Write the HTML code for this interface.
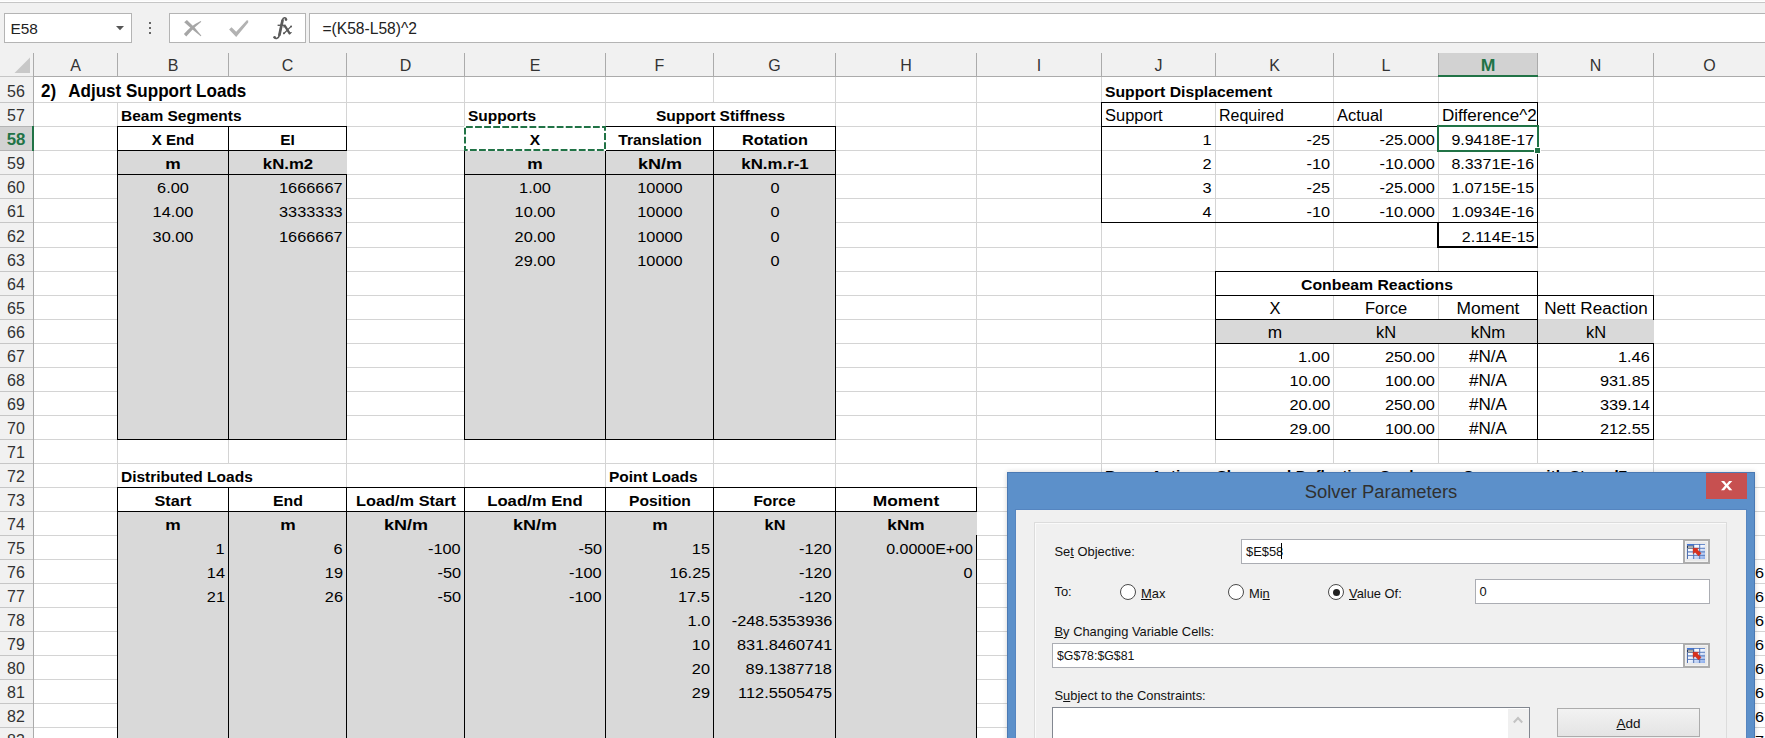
<!DOCTYPE html>
<html><head><meta charset="utf-8"><title>Excel Solver</title>
<style>
html,body{margin:0;padding:0;background:#fff}
body{width:1765px;height:738px;overflow:hidden;position:relative;font-family:"Liberation Sans",sans-serif}
#r{position:absolute;left:0;top:0;width:1765px;height:738px;overflow:hidden}
#r>div,#r>svg{position:absolute;display:block}
</style></head><body><div id="r">
<div style="left:0px;top:0px;width:1765px;height:77px;background:#f1f1f1;"></div>
<div style="left:0px;top:0px;width:1765px;height:1px;background:#fafafa;"></div>
<div style="left:0px;top:1px;width:1765px;height:1px;background:#fff;"></div>
<div style="left:0px;top:2px;width:1765px;height:1px;background:#c6c6c6;"></div>
<div style="left:4px;top:13px;width:128px;height:30px;background:#fff;border:1px solid #b4b4b4;box-sizing:border-box;"></div>
<div style="top:16.71px;height:24px;line-height:24px;font-size:15.4px;color:#222;white-space:pre;font-family:'Liberation Sans',sans-serif;left:10.5px;">E58</div>
<svg style="left:115px;top:25px" width="10" height="6"><path d="M1 1h8L5 5.2z" fill="#555"/></svg>
<div style="left:149px;top:22px;width:2px;height:2px;background:#666;"></div>
<div style="left:149px;top:27px;width:2px;height:2px;background:#666;"></div>
<div style="left:149px;top:32px;width:2px;height:2px;background:#666;"></div>
<div style="left:169px;top:13px;width:137px;height:30px;background:#fff;border:1px solid #b4b4b4;box-sizing:border-box;"></div>
<svg style="left:180px;top:16px" width="120" height="26"><path d="M6.9 3.9Q15 11 21.4 19.7L20.7 20.3Q12 13.5 4.2 6.3Z" fill="#a6a6a6"/><path d="M3.9 18Q11 9.5 20.7 4.9L21.3 5.7Q13.5 11.5 6.3 20.4Z" fill="#a6a6a6"/><path d="M49.1 13.5L51.5 11.2L56.2 15.8L66.8 4.3L68.2 4.6L68.2 6.5L56.2 21Z" fill="#b2b2b2"/></svg>
<svg style="left:270px;top:14px" width="24" height="28"><path d="M16.2 5.3C16 3.3 13.2 2.9 12.4 6.2L9.3 21.4C8.6 24.7 5.6 25.2 4.4 23.6" stroke="#5a5a5a" stroke-width="1.6" fill="none" stroke-linecap="round"/><path d="M12.5 6.5L9.4 21" stroke="#5a5a5a" stroke-width="2.7" fill="none" stroke-linecap="round"/><path d="M7.6 11.3H15.6" stroke="#5a5a5a" stroke-width="1.4" fill="none"/><circle cx="16" cy="5.6" r="1.3" fill="#5a5a5a"/><circle cx="4.6" cy="23.3" r="1.3" fill="#5a5a5a"/><path d="M15.2 12.4L19.6 19.4" stroke="#5a5a5a" stroke-width="2.3" fill="none" stroke-linecap="round"/><path d="M21.1 12.3L13.9 19.5" stroke="#5a5a5a" stroke-width="1.2" fill="none" stroke-linecap="round"/><path d="M13.8 12.9L15.2 12.2M19.6 19.5L21.2 18.6" stroke="#5a5a5a" stroke-width="1.2" fill="none" stroke-linecap="round"/><circle cx="21.1" cy="12.5" r=".95" fill="#5a5a5a"/><circle cx="13.9" cy="19.3" r=".95" fill="#5a5a5a"/></svg>
<div style="left:309px;top:13px;width:1458px;height:30px;background:#fff;border:1px solid #b4b4b4;box-sizing:border-box;"></div>
<div style="top:16.84px;height:24px;line-height:24px;font-size:15.6px;color:#222;white-space:pre;font-family:'Liberation Sans',sans-serif;left:322.5px;">=(K58-L58)^2</div>
<div style="left:0px;top:76px;width:1766px;height:1px;background:#ababab;"></div>
<div style="left:0px;top:76px;width:33px;height:1px;background:#c6c6c6;"></div>
<svg style="left:14px;top:57px" width="17" height="17"><path d="M16 0.5V16H0.5z" fill="#c8c8c8"/></svg>
<div style="left:1438px;top:53px;width:100px;height:22px;background:#d2d2d2;"></div>
<div style="left:33px;top:53px;width:1px;height:24px;background:#ababab;"></div>
<div style="left:117px;top:53px;width:1px;height:24px;background:#ababab;"></div>
<div style="left:228px;top:53px;width:1px;height:24px;background:#ababab;"></div>
<div style="left:346px;top:53px;width:1px;height:24px;background:#ababab;"></div>
<div style="left:464px;top:53px;width:1px;height:24px;background:#ababab;"></div>
<div style="left:605px;top:53px;width:1px;height:24px;background:#ababab;"></div>
<div style="left:713px;top:53px;width:1px;height:24px;background:#ababab;"></div>
<div style="left:835px;top:53px;width:1px;height:24px;background:#ababab;"></div>
<div style="left:976px;top:53px;width:1px;height:24px;background:#ababab;"></div>
<div style="left:1101px;top:53px;width:1px;height:24px;background:#ababab;"></div>
<div style="left:1215px;top:53px;width:1px;height:24px;background:#ababab;"></div>
<div style="left:1333px;top:53px;width:1px;height:24px;background:#ababab;"></div>
<div style="left:1438px;top:53px;width:1px;height:24px;background:#ababab;"></div>
<div style="left:1537px;top:53px;width:1px;height:24px;background:#ababab;"></div>
<div style="left:1653px;top:53px;width:1px;height:24px;background:#ababab;"></div>
<div style="left:1438px;top:75px;width:100px;height:2px;background:#217346;"></div>
<div style="top:53.91px;height:24px;line-height:24px;font-size:16px;color:#333;white-space:pre;font-family:'Liberation Sans',sans-serif;left:-324.5px;width:800px;text-align:center;">A</div>
<div style="top:53.91px;height:24px;line-height:24px;font-size:16px;color:#333;white-space:pre;font-family:'Liberation Sans',sans-serif;left:-227.0px;width:800px;text-align:center;">B</div>
<div style="top:53.91px;height:24px;line-height:24px;font-size:16px;color:#333;white-space:pre;font-family:'Liberation Sans',sans-serif;left:-112.5px;width:800px;text-align:center;">C</div>
<div style="top:53.91px;height:24px;line-height:24px;font-size:16px;color:#333;white-space:pre;font-family:'Liberation Sans',sans-serif;left:5.5px;width:800px;text-align:center;">D</div>
<div style="top:53.91px;height:24px;line-height:24px;font-size:16px;color:#333;white-space:pre;font-family:'Liberation Sans',sans-serif;left:135.0px;width:800px;text-align:center;">E</div>
<div style="top:53.91px;height:24px;line-height:24px;font-size:16px;color:#333;white-space:pre;font-family:'Liberation Sans',sans-serif;left:259.5px;width:800px;text-align:center;">F</div>
<div style="top:53.91px;height:24px;line-height:24px;font-size:16px;color:#333;white-space:pre;font-family:'Liberation Sans',sans-serif;left:374.5px;width:800px;text-align:center;">G</div>
<div style="top:53.91px;height:24px;line-height:24px;font-size:16px;color:#333;white-space:pre;font-family:'Liberation Sans',sans-serif;left:506.0px;width:800px;text-align:center;">H</div>
<div style="top:53.91px;height:24px;line-height:24px;font-size:16px;color:#333;white-space:pre;font-family:'Liberation Sans',sans-serif;left:639.0px;width:800px;text-align:center;">I</div>
<div style="top:53.91px;height:24px;line-height:24px;font-size:16px;color:#333;white-space:pre;font-family:'Liberation Sans',sans-serif;left:758.5px;width:800px;text-align:center;">J</div>
<div style="top:53.91px;height:24px;line-height:24px;font-size:16px;color:#333;white-space:pre;font-family:'Liberation Sans',sans-serif;left:874.5px;width:800px;text-align:center;">K</div>
<div style="top:53.91px;height:24px;line-height:24px;font-size:16px;color:#333;white-space:pre;font-family:'Liberation Sans',sans-serif;left:986.0px;width:800px;text-align:center;">L</div>
<div style="top:53.91px;height:24px;line-height:24px;font-size:16px;color:#217346;white-space:pre;font-family:'Liberation Sans',sans-serif;font-weight:bold;left:1088.0px;width:800px;text-align:center;transform:scaleX(1.1);transform-origin:50% 0;">M</div>
<div style="top:53.91px;height:24px;line-height:24px;font-size:16px;color:#333;white-space:pre;font-family:'Liberation Sans',sans-serif;left:1195.5px;width:800px;text-align:center;">N</div>
<div style="top:53.91px;height:24px;line-height:24px;font-size:16px;color:#333;white-space:pre;font-family:'Liberation Sans',sans-serif;left:1309.5px;width:800px;text-align:center;">O</div>
<div style="left:0px;top:77px;width:1765px;height:661px;background:#fff;"></div>
<div style="left:34px;top:102px;width:1732px;height:1px;background:#d4d4d4;"></div>
<div style="left:34px;top:126px;width:1732px;height:1px;background:#d4d4d4;"></div>
<div style="left:34px;top:150px;width:1732px;height:1px;background:#d4d4d4;"></div>
<div style="left:34px;top:174px;width:1732px;height:1px;background:#d4d4d4;"></div>
<div style="left:34px;top:198px;width:1732px;height:1px;background:#d4d4d4;"></div>
<div style="left:34px;top:222px;width:1732px;height:1px;background:#d4d4d4;"></div>
<div style="left:34px;top:247px;width:1732px;height:1px;background:#d4d4d4;"></div>
<div style="left:34px;top:271px;width:1732px;height:1px;background:#d4d4d4;"></div>
<div style="left:34px;top:295px;width:1732px;height:1px;background:#d4d4d4;"></div>
<div style="left:34px;top:319px;width:1732px;height:1px;background:#d4d4d4;"></div>
<div style="left:34px;top:343px;width:1732px;height:1px;background:#d4d4d4;"></div>
<div style="left:34px;top:367px;width:1732px;height:1px;background:#d4d4d4;"></div>
<div style="left:34px;top:391px;width:1732px;height:1px;background:#d4d4d4;"></div>
<div style="left:34px;top:415px;width:1732px;height:1px;background:#d4d4d4;"></div>
<div style="left:34px;top:439px;width:1732px;height:1px;background:#d4d4d4;"></div>
<div style="left:34px;top:463px;width:1732px;height:1px;background:#d4d4d4;"></div>
<div style="left:34px;top:487px;width:1732px;height:1px;background:#d4d4d4;"></div>
<div style="left:34px;top:511px;width:1732px;height:1px;background:#d4d4d4;"></div>
<div style="left:34px;top:535px;width:1732px;height:1px;background:#d4d4d4;"></div>
<div style="left:34px;top:559px;width:1732px;height:1px;background:#d4d4d4;"></div>
<div style="left:34px;top:583px;width:1732px;height:1px;background:#d4d4d4;"></div>
<div style="left:34px;top:607px;width:1732px;height:1px;background:#d4d4d4;"></div>
<div style="left:34px;top:631px;width:1732px;height:1px;background:#d4d4d4;"></div>
<div style="left:34px;top:655px;width:1732px;height:1px;background:#d4d4d4;"></div>
<div style="left:34px;top:679px;width:1732px;height:1px;background:#d4d4d4;"></div>
<div style="left:34px;top:703px;width:1732px;height:1px;background:#d4d4d4;"></div>
<div style="left:34px;top:727px;width:1732px;height:1px;background:#d4d4d4;"></div>
<div style="left:117px;top:77px;width:1px;height:662px;background:#d4d4d4;"></div>
<div style="left:228px;top:77px;width:1px;height:662px;background:#d4d4d4;"></div>
<div style="left:346px;top:77px;width:1px;height:662px;background:#d4d4d4;"></div>
<div style="left:464px;top:77px;width:1px;height:662px;background:#d4d4d4;"></div>
<div style="left:605px;top:77px;width:1px;height:662px;background:#d4d4d4;"></div>
<div style="left:713px;top:77px;width:1px;height:662px;background:#d4d4d4;"></div>
<div style="left:835px;top:77px;width:1px;height:662px;background:#d4d4d4;"></div>
<div style="left:976px;top:77px;width:1px;height:662px;background:#d4d4d4;"></div>
<div style="left:1101px;top:77px;width:1px;height:662px;background:#d4d4d4;"></div>
<div style="left:1215px;top:77px;width:1px;height:662px;background:#d4d4d4;"></div>
<div style="left:1333px;top:77px;width:1px;height:662px;background:#d4d4d4;"></div>
<div style="left:1438px;top:77px;width:1px;height:662px;background:#d4d4d4;"></div>
<div style="left:1537px;top:77px;width:1px;height:662px;background:#d4d4d4;"></div>
<div style="left:1653px;top:77px;width:1px;height:662px;background:#d4d4d4;"></div>
<div style="left:117px;top:77px;width:1px;height:25px;background:#fff;"></div>
<div style="left:228px;top:77px;width:1px;height:25px;background:#fff;"></div>
<div style="left:228px;top:103px;width:1px;height:23px;background:#fff;"></div>
<div style="left:713px;top:103px;width:1px;height:23px;background:#fff;"></div>
<div style="left:1215px;top:77px;width:1px;height:25px;background:#fff;"></div>
<div style="left:1333px;top:272px;width:1px;height:23px;background:#fff;"></div>
<div style="left:1438px;top:272px;width:1px;height:23px;background:#fff;"></div>
<div style="left:228px;top:464px;width:1px;height:23px;background:#fff;"></div>
<div style="left:1215px;top:464px;width:1px;height:23px;background:#fff;"></div>
<div style="left:1333px;top:464px;width:1px;height:23px;background:#fff;"></div>
<div style="left:1438px;top:464px;width:1px;height:23px;background:#fff;"></div>
<div style="left:1537px;top:464px;width:1px;height:23px;background:#fff;"></div>
<div style="left:0px;top:77px;width:33px;height:661px;background:#f1f1f1;"></div>
<div style="left:33px;top:77px;width:1px;height:662px;background:#ababab;"></div>
<div style="left:0px;top:102px;width:33px;height:1px;background:#c6c6c6;"></div>
<div style="left:0px;top:126px;width:33px;height:1px;background:#c6c6c6;"></div>
<div style="left:0px;top:150px;width:33px;height:1px;background:#c6c6c6;"></div>
<div style="left:0px;top:174px;width:33px;height:1px;background:#c6c6c6;"></div>
<div style="left:0px;top:198px;width:33px;height:1px;background:#c6c6c6;"></div>
<div style="left:0px;top:222px;width:33px;height:1px;background:#c6c6c6;"></div>
<div style="left:0px;top:247px;width:33px;height:1px;background:#c6c6c6;"></div>
<div style="left:0px;top:271px;width:33px;height:1px;background:#c6c6c6;"></div>
<div style="left:0px;top:295px;width:33px;height:1px;background:#c6c6c6;"></div>
<div style="left:0px;top:319px;width:33px;height:1px;background:#c6c6c6;"></div>
<div style="left:0px;top:343px;width:33px;height:1px;background:#c6c6c6;"></div>
<div style="left:0px;top:367px;width:33px;height:1px;background:#c6c6c6;"></div>
<div style="left:0px;top:391px;width:33px;height:1px;background:#c6c6c6;"></div>
<div style="left:0px;top:415px;width:33px;height:1px;background:#c6c6c6;"></div>
<div style="left:0px;top:439px;width:33px;height:1px;background:#c6c6c6;"></div>
<div style="left:0px;top:463px;width:33px;height:1px;background:#c6c6c6;"></div>
<div style="left:0px;top:487px;width:33px;height:1px;background:#c6c6c6;"></div>
<div style="left:0px;top:511px;width:33px;height:1px;background:#c6c6c6;"></div>
<div style="left:0px;top:535px;width:33px;height:1px;background:#c6c6c6;"></div>
<div style="left:0px;top:559px;width:33px;height:1px;background:#c6c6c6;"></div>
<div style="left:0px;top:583px;width:33px;height:1px;background:#c6c6c6;"></div>
<div style="left:0px;top:607px;width:33px;height:1px;background:#c6c6c6;"></div>
<div style="left:0px;top:631px;width:33px;height:1px;background:#c6c6c6;"></div>
<div style="left:0px;top:655px;width:33px;height:1px;background:#c6c6c6;"></div>
<div style="left:0px;top:679px;width:33px;height:1px;background:#c6c6c6;"></div>
<div style="left:0px;top:703px;width:33px;height:1px;background:#c6c6c6;"></div>
<div style="left:0px;top:727px;width:33px;height:1px;background:#c6c6c6;"></div>
<div style="left:0px;top:127px;width:32px;height:23px;background:#d2d2d2;"></div>
<div style="left:0px;top:126px;width:33px;height:1px;background:#b4b4b4;"></div>
<div style="left:0px;top:150px;width:33px;height:1px;background:#b4b4b4;"></div>
<div style="left:32px;top:126px;width:2px;height:25px;background:#217346;"></div>
<div style="top:79.91px;height:24px;line-height:24px;font-size:16px;color:#333;white-space:pre;font-family:'Liberation Sans',sans-serif;left:-384.0px;width:800px;text-align:center;">56</div>
<div style="top:103.91px;height:24px;line-height:24px;font-size:16px;color:#333;white-space:pre;font-family:'Liberation Sans',sans-serif;left:-384.0px;width:800px;text-align:center;">57</div>
<div style="top:127.91px;height:24px;line-height:24px;font-size:16px;color:#217346;white-space:pre;font-family:'Liberation Sans',sans-serif;font-weight:bold;left:-383.8px;width:800px;text-align:center;transform:scaleX(1.05);transform-origin:50% 0;">58</div>
<div style="top:151.91px;height:24px;line-height:24px;font-size:16px;color:#333;white-space:pre;font-family:'Liberation Sans',sans-serif;left:-384.0px;width:800px;text-align:center;">59</div>
<div style="top:175.91px;height:24px;line-height:24px;font-size:16px;color:#333;white-space:pre;font-family:'Liberation Sans',sans-serif;left:-384.0px;width:800px;text-align:center;">60</div>
<div style="top:199.91px;height:24px;line-height:24px;font-size:16px;color:#333;white-space:pre;font-family:'Liberation Sans',sans-serif;left:-384.0px;width:800px;text-align:center;">61</div>
<div style="top:224.91px;height:24px;line-height:24px;font-size:16px;color:#333;white-space:pre;font-family:'Liberation Sans',sans-serif;left:-384.0px;width:800px;text-align:center;">62</div>
<div style="top:248.91px;height:24px;line-height:24px;font-size:16px;color:#333;white-space:pre;font-family:'Liberation Sans',sans-serif;left:-384.0px;width:800px;text-align:center;">63</div>
<div style="top:272.91px;height:24px;line-height:24px;font-size:16px;color:#333;white-space:pre;font-family:'Liberation Sans',sans-serif;left:-384.0px;width:800px;text-align:center;">64</div>
<div style="top:296.91px;height:24px;line-height:24px;font-size:16px;color:#333;white-space:pre;font-family:'Liberation Sans',sans-serif;left:-384.0px;width:800px;text-align:center;">65</div>
<div style="top:320.91px;height:24px;line-height:24px;font-size:16px;color:#333;white-space:pre;font-family:'Liberation Sans',sans-serif;left:-384.0px;width:800px;text-align:center;">66</div>
<div style="top:344.91px;height:24px;line-height:24px;font-size:16px;color:#333;white-space:pre;font-family:'Liberation Sans',sans-serif;left:-384.0px;width:800px;text-align:center;">67</div>
<div style="top:368.91px;height:24px;line-height:24px;font-size:16px;color:#333;white-space:pre;font-family:'Liberation Sans',sans-serif;left:-384.0px;width:800px;text-align:center;">68</div>
<div style="top:392.91px;height:24px;line-height:24px;font-size:16px;color:#333;white-space:pre;font-family:'Liberation Sans',sans-serif;left:-384.0px;width:800px;text-align:center;">69</div>
<div style="top:416.91px;height:24px;line-height:24px;font-size:16px;color:#333;white-space:pre;font-family:'Liberation Sans',sans-serif;left:-384.0px;width:800px;text-align:center;">70</div>
<div style="top:440.91px;height:24px;line-height:24px;font-size:16px;color:#333;white-space:pre;font-family:'Liberation Sans',sans-serif;left:-384.0px;width:800px;text-align:center;">71</div>
<div style="top:464.91px;height:24px;line-height:24px;font-size:16px;color:#333;white-space:pre;font-family:'Liberation Sans',sans-serif;left:-384.0px;width:800px;text-align:center;">72</div>
<div style="top:488.91px;height:24px;line-height:24px;font-size:16px;color:#333;white-space:pre;font-family:'Liberation Sans',sans-serif;left:-384.0px;width:800px;text-align:center;">73</div>
<div style="top:512.91px;height:24px;line-height:24px;font-size:16px;color:#333;white-space:pre;font-family:'Liberation Sans',sans-serif;left:-384.0px;width:800px;text-align:center;">74</div>
<div style="top:536.91px;height:24px;line-height:24px;font-size:16px;color:#333;white-space:pre;font-family:'Liberation Sans',sans-serif;left:-384.0px;width:800px;text-align:center;">75</div>
<div style="top:560.91px;height:24px;line-height:24px;font-size:16px;color:#333;white-space:pre;font-family:'Liberation Sans',sans-serif;left:-384.0px;width:800px;text-align:center;">76</div>
<div style="top:584.91px;height:24px;line-height:24px;font-size:16px;color:#333;white-space:pre;font-family:'Liberation Sans',sans-serif;left:-384.0px;width:800px;text-align:center;">77</div>
<div style="top:608.91px;height:24px;line-height:24px;font-size:16px;color:#333;white-space:pre;font-family:'Liberation Sans',sans-serif;left:-384.0px;width:800px;text-align:center;">78</div>
<div style="top:632.91px;height:24px;line-height:24px;font-size:16px;color:#333;white-space:pre;font-family:'Liberation Sans',sans-serif;left:-384.0px;width:800px;text-align:center;">79</div>
<div style="top:656.91px;height:24px;line-height:24px;font-size:16px;color:#333;white-space:pre;font-family:'Liberation Sans',sans-serif;left:-384.0px;width:800px;text-align:center;">80</div>
<div style="top:680.91px;height:24px;line-height:24px;font-size:16px;color:#333;white-space:pre;font-family:'Liberation Sans',sans-serif;left:-384.0px;width:800px;text-align:center;">81</div>
<div style="top:704.91px;height:24px;line-height:24px;font-size:16px;color:#333;white-space:pre;font-family:'Liberation Sans',sans-serif;left:-384.0px;width:800px;text-align:center;">82</div>
<div style="top:728.91px;height:24px;line-height:24px;font-size:16px;color:#333;white-space:pre;font-family:'Liberation Sans',sans-serif;left:-384.0px;width:800px;text-align:center;">83</div>
<div style="left:118px;top:151px;width:229px;height:289px;background:#d9d9d9;"></div>
<div style="left:465px;top:151px;width:371px;height:289px;background:#d9d9d9;"></div>
<div style="left:118px;top:512px;width:859px;height:227px;background:#d9d9d9;"></div>
<div style="left:1216px;top:320px;width:438px;height:24px;background:#d9d9d9;"></div>
<div style="left:117px;top:126px;width:230px;height:1px;background:#000;"></div>
<div style="left:117px;top:150px;width:230px;height:1px;background:#000;"></div>
<div style="left:117px;top:174px;width:230px;height:1px;background:#000;"></div>
<div style="left:117px;top:439px;width:230px;height:1px;background:#000;"></div>
<div style="left:117px;top:126px;width:1px;height:314px;background:#000;"></div>
<div style="left:228px;top:126px;width:1px;height:314px;background:#000;"></div>
<div style="left:346px;top:126px;width:1px;height:25px;background:#000;"></div>
<div style="left:346px;top:174px;width:1px;height:266px;background:#000;"></div>
<div style="left:605px;top:126px;width:231px;height:1px;background:#000;"></div>
<div style="left:464px;top:150px;width:372px;height:1px;background:#000;"></div>
<div style="left:464px;top:174px;width:372px;height:1px;background:#000;"></div>
<div style="left:464px;top:439px;width:372px;height:1px;background:#000;"></div>
<div style="left:464px;top:150px;width:1px;height:290px;background:#000;"></div>
<div style="left:605px;top:126px;width:1px;height:314px;background:#000;"></div>
<div style="left:713px;top:126px;width:1px;height:314px;background:#000;"></div>
<div style="left:835px;top:126px;width:1px;height:314px;background:#000;"></div>
<div style="left:1101px;top:102px;width:437px;height:1px;background:#000;"></div>
<div style="left:1101px;top:126px;width:437px;height:1px;background:#000;"></div>
<div style="left:1101px;top:222px;width:437px;height:1px;background:#000;"></div>
<div style="left:1101px;top:102px;width:1px;height:121px;background:#000;"></div>
<div style="left:1537px;top:102px;width:1px;height:146px;background:#000;"></div>
<div style="left:1437px;top:222px;width:2px;height:26px;background:#000;"></div>
<div style="left:1437px;top:246px;width:101px;height:2px;background:#000;"></div>
<div style="left:1215px;top:271px;width:323px;height:1px;background:#000;"></div>
<div style="left:1215px;top:295px;width:439px;height:1px;background:#000;"></div>
<div style="left:1215px;top:319px;width:323px;height:1px;background:#000;"></div>
<div style="left:1215px;top:343px;width:439px;height:1px;background:#000;"></div>
<div style="left:1215px;top:439px;width:439px;height:1px;background:#000;"></div>
<div style="left:1215px;top:271px;width:1px;height:169px;background:#000;"></div>
<div style="left:1537px;top:271px;width:1px;height:169px;background:#000;"></div>
<div style="left:1653px;top:295px;width:1px;height:25px;background:#000;"></div>
<div style="left:1653px;top:343px;width:1px;height:97px;background:#000;"></div>
<div style="left:117px;top:487px;width:860px;height:1px;background:#000;"></div>
<div style="left:117px;top:511px;width:860px;height:1px;background:#000;"></div>
<div style="left:117px;top:487px;width:1px;height:252px;background:#000;"></div>
<div style="left:228px;top:487px;width:1px;height:252px;background:#000;"></div>
<div style="left:346px;top:487px;width:1px;height:252px;background:#000;"></div>
<div style="left:464px;top:487px;width:1px;height:252px;background:#000;"></div>
<div style="left:605px;top:487px;width:1px;height:252px;background:#000;"></div>
<div style="left:713px;top:487px;width:1px;height:252px;background:#000;"></div>
<div style="left:835px;top:487px;width:1px;height:252px;background:#000;"></div>
<div style="left:976px;top:487px;width:1px;height:25px;background:#000;"></div>
<div style="left:976px;top:535px;width:1px;height:204px;background:#000;"></div>
<div style="top:78.55px;height:24px;line-height:24px;font-size:18.6px;color:#000;white-space:pre;font-family:'Liberation Sans',sans-serif;font-weight:bold;left:41.0px;transform:scaleX(0.917);transform-origin:0 0;">2)<span style="letter-spacing:1.4px">  </span>Adjust Support Loads</div>
<div style="top:103.88px;height:24px;line-height:24px;font-size:15.5px;color:#000;white-space:pre;font-family:'Liberation Sans',sans-serif;font-weight:bold;left:121px;">Beam Segments</div>
<div style="top:127.88px;height:24px;line-height:24px;font-size:15.5px;color:#000;white-space:pre;font-family:'Liberation Sans',sans-serif;font-weight:bold;left:-227.0px;width:800px;text-align:center;transform:scaleX(0.97);transform-origin:50% 0;">X End</div>
<div style="top:127.88px;height:24px;line-height:24px;font-size:15.5px;color:#000;white-space:pre;font-family:'Liberation Sans',sans-serif;font-weight:bold;left:-112.5px;width:800px;text-align:center;">EI</div>
<div style="top:151.88px;height:24px;line-height:24px;font-size:15.5px;color:#000;white-space:pre;font-family:'Liberation Sans',sans-serif;font-weight:bold;left:-227.0px;width:800px;text-align:center;transform:scaleX(1.12);transform-origin:50% 0;">m</div>
<div style="top:151.88px;height:24px;line-height:24px;font-size:15.5px;color:#000;white-space:pre;font-family:'Liberation Sans',sans-serif;font-weight:bold;left:-112.5px;width:800px;text-align:center;transform:scaleX(1.08);transform-origin:50% 0;">kN.m2</div>
<div style="top:175.94px;height:24px;line-height:24px;font-size:15.3px;color:#000;white-space:pre;font-family:'Liberation Sans',sans-serif;left:-227.0px;width:800px;text-align:center;transform:scaleX(1.0667);transform-origin:50% 0;">6.00</div>
<div style="top:175.94px;height:24px;line-height:24px;font-size:15.3px;color:#000;white-space:pre;font-family:'Liberation Sans',sans-serif;right:1422px;text-align:right;transform:scaleX(1.0667);transform-origin:100% 0;">1666667</div>
<div style="top:199.94px;height:24px;line-height:24px;font-size:15.3px;color:#000;white-space:pre;font-family:'Liberation Sans',sans-serif;left:-227.0px;width:800px;text-align:center;transform:scaleX(1.0667);transform-origin:50% 0;">14.00</div>
<div style="top:199.94px;height:24px;line-height:24px;font-size:15.3px;color:#000;white-space:pre;font-family:'Liberation Sans',sans-serif;right:1422px;text-align:right;transform:scaleX(1.0667);transform-origin:100% 0;">3333333</div>
<div style="top:224.94px;height:24px;line-height:24px;font-size:15.3px;color:#000;white-space:pre;font-family:'Liberation Sans',sans-serif;left:-227.0px;width:800px;text-align:center;transform:scaleX(1.0667);transform-origin:50% 0;">30.00</div>
<div style="top:224.94px;height:24px;line-height:24px;font-size:15.3px;color:#000;white-space:pre;font-family:'Liberation Sans',sans-serif;right:1422px;text-align:right;transform:scaleX(1.0667);transform-origin:100% 0;">1666667</div>
<div style="top:103.88px;height:24px;line-height:24px;font-size:15.5px;color:#000;white-space:pre;font-family:'Liberation Sans',sans-serif;font-weight:bold;left:468px;">Supports</div>
<div style="top:103.88px;height:24px;line-height:24px;font-size:15.5px;color:#000;white-space:pre;font-family:'Liberation Sans',sans-serif;font-weight:bold;left:320.5px;width:800px;text-align:center;">Support Stiffness</div>
<div style="top:127.88px;height:24px;line-height:24px;font-size:15.5px;color:#000;white-space:pre;font-family:'Liberation Sans',sans-serif;font-weight:bold;left:135.0px;width:800px;text-align:center;">X</div>
<div style="top:127.88px;height:24px;line-height:24px;font-size:15.5px;color:#000;white-space:pre;font-family:'Liberation Sans',sans-serif;font-weight:bold;left:259.5px;width:800px;text-align:center;transform:scaleX(1.012);transform-origin:50% 0;">Translation</div>
<div style="top:127.88px;height:24px;line-height:24px;font-size:15.5px;color:#000;white-space:pre;font-family:'Liberation Sans',sans-serif;font-weight:bold;left:374.5px;width:800px;text-align:center;transform:scaleX(1.05);transform-origin:50% 0;">Rotation</div>
<div style="top:151.88px;height:24px;line-height:24px;font-size:15.5px;color:#000;white-space:pre;font-family:'Liberation Sans',sans-serif;font-weight:bold;left:135.0px;width:800px;text-align:center;transform:scaleX(1.12);transform-origin:50% 0;">m</div>
<div style="top:151.88px;height:24px;line-height:24px;font-size:15.5px;color:#000;white-space:pre;font-family:'Liberation Sans',sans-serif;font-weight:bold;left:259.5px;width:800px;text-align:center;transform:scaleX(1.16);transform-origin:50% 0;">kN/m</div>
<div style="top:151.88px;height:24px;line-height:24px;font-size:15.5px;color:#000;white-space:pre;font-family:'Liberation Sans',sans-serif;font-weight:bold;left:374.5px;width:800px;text-align:center;transform:scaleX(1.087);transform-origin:50% 0;">kN.m.r-1</div>
<div style="top:175.94px;height:24px;line-height:24px;font-size:15.3px;color:#000;white-space:pre;font-family:'Liberation Sans',sans-serif;left:135.0px;width:800px;text-align:center;transform:scaleX(1.0667);transform-origin:50% 0;">1.00</div>
<div style="top:175.94px;height:24px;line-height:24px;font-size:15.3px;color:#000;white-space:pre;font-family:'Liberation Sans',sans-serif;left:259.5px;width:800px;text-align:center;transform:scaleX(1.0667);transform-origin:50% 0;">10000</div>
<div style="top:175.94px;height:24px;line-height:24px;font-size:15.3px;color:#000;white-space:pre;font-family:'Liberation Sans',sans-serif;left:374.5px;width:800px;text-align:center;transform:scaleX(1.0667);transform-origin:50% 0;">0</div>
<div style="top:199.94px;height:24px;line-height:24px;font-size:15.3px;color:#000;white-space:pre;font-family:'Liberation Sans',sans-serif;left:135.0px;width:800px;text-align:center;transform:scaleX(1.0667);transform-origin:50% 0;">10.00</div>
<div style="top:199.94px;height:24px;line-height:24px;font-size:15.3px;color:#000;white-space:pre;font-family:'Liberation Sans',sans-serif;left:259.5px;width:800px;text-align:center;transform:scaleX(1.0667);transform-origin:50% 0;">10000</div>
<div style="top:199.94px;height:24px;line-height:24px;font-size:15.3px;color:#000;white-space:pre;font-family:'Liberation Sans',sans-serif;left:374.5px;width:800px;text-align:center;transform:scaleX(1.0667);transform-origin:50% 0;">0</div>
<div style="top:224.94px;height:24px;line-height:24px;font-size:15.3px;color:#000;white-space:pre;font-family:'Liberation Sans',sans-serif;left:135.0px;width:800px;text-align:center;transform:scaleX(1.0667);transform-origin:50% 0;">20.00</div>
<div style="top:224.94px;height:24px;line-height:24px;font-size:15.3px;color:#000;white-space:pre;font-family:'Liberation Sans',sans-serif;left:259.5px;width:800px;text-align:center;transform:scaleX(1.0667);transform-origin:50% 0;">10000</div>
<div style="top:224.94px;height:24px;line-height:24px;font-size:15.3px;color:#000;white-space:pre;font-family:'Liberation Sans',sans-serif;left:374.5px;width:800px;text-align:center;transform:scaleX(1.0667);transform-origin:50% 0;">0</div>
<div style="top:248.94px;height:24px;line-height:24px;font-size:15.3px;color:#000;white-space:pre;font-family:'Liberation Sans',sans-serif;left:135.0px;width:800px;text-align:center;transform:scaleX(1.0667);transform-origin:50% 0;">29.00</div>
<div style="top:248.94px;height:24px;line-height:24px;font-size:15.3px;color:#000;white-space:pre;font-family:'Liberation Sans',sans-serif;left:259.5px;width:800px;text-align:center;transform:scaleX(1.0667);transform-origin:50% 0;">10000</div>
<div style="top:248.94px;height:24px;line-height:24px;font-size:15.3px;color:#000;white-space:pre;font-family:'Liberation Sans',sans-serif;left:374.5px;width:800px;text-align:center;transform:scaleX(1.0667);transform-origin:50% 0;">0</div>
<div style="top:80.18px;height:24px;line-height:24px;font-size:15.5px;color:#000;white-space:pre;font-family:'Liberation Sans',sans-serif;font-weight:bold;left:1105px;transform:scaleX(1.016);transform-origin:0 0;">Support Displacement</div>
<div style="top:103.84px;height:24px;line-height:24px;font-size:15.6px;color:#000;white-space:pre;font-family:'Liberation Sans',sans-serif;left:1105px;transform:scaleX(1.0564);transform-origin:0 0;">Support</div>
<div style="top:103.84px;height:24px;line-height:24px;font-size:15.6px;color:#000;white-space:pre;font-family:'Liberation Sans',sans-serif;left:1219px;transform:scaleX(1.0256);transform-origin:0 0;">Required</div>
<div style="top:103.84px;height:24px;line-height:24px;font-size:15.6px;color:#000;white-space:pre;font-family:'Liberation Sans',sans-serif;left:1337px;transform:scaleX(1.0564);transform-origin:0 0;">Actual</div>
<div style="top:103.84px;height:24px;line-height:24px;font-size:15.6px;color:#000;white-space:pre;font-family:'Liberation Sans',sans-serif;left:1442px;transform:scaleX(1.0923);transform-origin:0 0;">Difference^2</div>
<div style="top:127.94px;height:24px;line-height:24px;font-size:15.3px;color:#000;white-space:pre;font-family:'Liberation Sans',sans-serif;right:553px;text-align:right;transform:scaleX(1.0667);transform-origin:100% 0;">1</div>
<div style="top:127.94px;height:24px;line-height:24px;font-size:15.3px;color:#000;white-space:pre;font-family:'Liberation Sans',sans-serif;right:435px;text-align:right;transform:scaleX(1.0667);transform-origin:100% 0;">-25</div>
<div style="top:127.94px;height:24px;line-height:24px;font-size:15.3px;color:#000;white-space:pre;font-family:'Liberation Sans',sans-serif;right:330px;text-align:right;transform:scaleX(1.0667);transform-origin:100% 0;">-25.000</div>
<div style="top:127.94px;height:24px;line-height:24px;font-size:15.3px;color:#000;white-space:pre;font-family:'Liberation Sans',sans-serif;right:231px;text-align:right;transform:scaleX(1.0458);transform-origin:100% 0;">9.9418E-17</div>
<div style="top:151.94px;height:24px;line-height:24px;font-size:15.3px;color:#000;white-space:pre;font-family:'Liberation Sans',sans-serif;right:553px;text-align:right;transform:scaleX(1.0667);transform-origin:100% 0;">2</div>
<div style="top:151.94px;height:24px;line-height:24px;font-size:15.3px;color:#000;white-space:pre;font-family:'Liberation Sans',sans-serif;right:435px;text-align:right;transform:scaleX(1.0667);transform-origin:100% 0;">-10</div>
<div style="top:151.94px;height:24px;line-height:24px;font-size:15.3px;color:#000;white-space:pre;font-family:'Liberation Sans',sans-serif;right:330px;text-align:right;transform:scaleX(1.0667);transform-origin:100% 0;">-10.000</div>
<div style="top:151.94px;height:24px;line-height:24px;font-size:15.3px;color:#000;white-space:pre;font-family:'Liberation Sans',sans-serif;right:231px;text-align:right;transform:scaleX(1.0458);transform-origin:100% 0;">8.3371E-16</div>
<div style="top:175.94px;height:24px;line-height:24px;font-size:15.3px;color:#000;white-space:pre;font-family:'Liberation Sans',sans-serif;right:553px;text-align:right;transform:scaleX(1.0667);transform-origin:100% 0;">3</div>
<div style="top:175.94px;height:24px;line-height:24px;font-size:15.3px;color:#000;white-space:pre;font-family:'Liberation Sans',sans-serif;right:435px;text-align:right;transform:scaleX(1.0667);transform-origin:100% 0;">-25</div>
<div style="top:175.94px;height:24px;line-height:24px;font-size:15.3px;color:#000;white-space:pre;font-family:'Liberation Sans',sans-serif;right:330px;text-align:right;transform:scaleX(1.0667);transform-origin:100% 0;">-25.000</div>
<div style="top:175.94px;height:24px;line-height:24px;font-size:15.3px;color:#000;white-space:pre;font-family:'Liberation Sans',sans-serif;right:231px;text-align:right;transform:scaleX(1.0458);transform-origin:100% 0;">1.0715E-15</div>
<div style="top:199.94px;height:24px;line-height:24px;font-size:15.3px;color:#000;white-space:pre;font-family:'Liberation Sans',sans-serif;right:553px;text-align:right;transform:scaleX(1.0667);transform-origin:100% 0;">4</div>
<div style="top:199.94px;height:24px;line-height:24px;font-size:15.3px;color:#000;white-space:pre;font-family:'Liberation Sans',sans-serif;right:435px;text-align:right;transform:scaleX(1.0667);transform-origin:100% 0;">-10</div>
<div style="top:199.94px;height:24px;line-height:24px;font-size:15.3px;color:#000;white-space:pre;font-family:'Liberation Sans',sans-serif;right:330px;text-align:right;transform:scaleX(1.0667);transform-origin:100% 0;">-10.000</div>
<div style="top:199.94px;height:24px;line-height:24px;font-size:15.3px;color:#000;white-space:pre;font-family:'Liberation Sans',sans-serif;right:231px;text-align:right;transform:scaleX(1.0458);transform-origin:100% 0;">1.0934E-16</div>
<div style="top:224.94px;height:24px;line-height:24px;font-size:15.3px;color:#000;white-space:pre;font-family:'Liberation Sans',sans-serif;right:231px;text-align:right;transform:scaleX(1.0458);transform-origin:100% 0;">2.114E-15</div>
<div style="top:272.88px;height:24px;line-height:24px;font-size:15.5px;color:#000;white-space:pre;font-family:'Liberation Sans',sans-serif;font-weight:bold;left:976.5px;width:800px;text-align:center;transform:scaleX(1.02);transform-origin:50% 0;">Conbeam Reactions</div>
<div style="top:296.84px;height:24px;line-height:24px;font-size:15.6px;color:#000;white-space:pre;font-family:'Liberation Sans',sans-serif;left:874.5px;width:800px;text-align:center;transform:scaleX(1.0564);transform-origin:50% 0;">X</div>
<div style="top:296.84px;height:24px;line-height:24px;font-size:15.6px;color:#000;white-space:pre;font-family:'Liberation Sans',sans-serif;left:986.0px;width:800px;text-align:center;transform:scaleX(1.0564);transform-origin:50% 0;">Force</div>
<div style="top:296.84px;height:24px;line-height:24px;font-size:15.6px;color:#000;white-space:pre;font-family:'Liberation Sans',sans-serif;left:1088.0px;width:800px;text-align:center;transform:scaleX(1.1159);transform-origin:50% 0;">Moment</div>
<div style="top:296.84px;height:24px;line-height:24px;font-size:15.6px;color:#000;white-space:pre;font-family:'Liberation Sans',sans-serif;left:1195.5px;width:800px;text-align:center;transform:scaleX(1.0944);transform-origin:50% 0;">Nett Reaction</div>
<div style="top:320.84px;height:24px;line-height:24px;font-size:15.6px;color:#000;white-space:pre;font-family:'Liberation Sans',sans-serif;left:874.5px;width:800px;text-align:center;transform:scaleX(1.1077);transform-origin:50% 0;">m</div>
<div style="top:320.84px;height:24px;line-height:24px;font-size:15.6px;color:#000;white-space:pre;font-family:'Liberation Sans',sans-serif;left:986.0px;width:800px;text-align:center;transform:scaleX(1.0564);transform-origin:50% 0;">kN</div>
<div style="top:320.84px;height:24px;line-height:24px;font-size:15.6px;color:#000;white-space:pre;font-family:'Liberation Sans',sans-serif;left:1088.0px;width:800px;text-align:center;transform:scaleX(1.0769);transform-origin:50% 0;">kNm</div>
<div style="top:320.84px;height:24px;line-height:24px;font-size:15.6px;color:#000;white-space:pre;font-family:'Liberation Sans',sans-serif;left:1195.5px;width:800px;text-align:center;transform:scaleX(1.0564);transform-origin:50% 0;">kN</div>
<div style="top:344.94px;height:24px;line-height:24px;font-size:15.3px;color:#000;white-space:pre;font-family:'Liberation Sans',sans-serif;right:435px;text-align:right;transform:scaleX(1.0667);transform-origin:100% 0;">1.00</div>
<div style="top:344.94px;height:24px;line-height:24px;font-size:15.3px;color:#000;white-space:pre;font-family:'Liberation Sans',sans-serif;right:330px;text-align:right;transform:scaleX(1.0667);transform-origin:100% 0;">250.00</div>
<div style="top:344.84px;height:24px;line-height:24px;font-size:15.6px;color:#000;white-space:pre;font-family:'Liberation Sans',sans-serif;left:1088.0px;width:800px;text-align:center;transform:scaleX(1.0974);transform-origin:50% 0;">#N/A</div>
<div style="top:344.94px;height:24px;line-height:24px;font-size:15.3px;color:#000;white-space:pre;font-family:'Liberation Sans',sans-serif;right:115px;text-align:right;transform:scaleX(1.0667);transform-origin:100% 0;">1.46</div>
<div style="top:368.94px;height:24px;line-height:24px;font-size:15.3px;color:#000;white-space:pre;font-family:'Liberation Sans',sans-serif;right:435px;text-align:right;transform:scaleX(1.0667);transform-origin:100% 0;">10.00</div>
<div style="top:368.94px;height:24px;line-height:24px;font-size:15.3px;color:#000;white-space:pre;font-family:'Liberation Sans',sans-serif;right:330px;text-align:right;transform:scaleX(1.0667);transform-origin:100% 0;">100.00</div>
<div style="top:368.84px;height:24px;line-height:24px;font-size:15.6px;color:#000;white-space:pre;font-family:'Liberation Sans',sans-serif;left:1088.0px;width:800px;text-align:center;transform:scaleX(1.0974);transform-origin:50% 0;">#N/A</div>
<div style="top:368.94px;height:24px;line-height:24px;font-size:15.3px;color:#000;white-space:pre;font-family:'Liberation Sans',sans-serif;right:115px;text-align:right;transform:scaleX(1.0667);transform-origin:100% 0;">931.85</div>
<div style="top:392.94px;height:24px;line-height:24px;font-size:15.3px;color:#000;white-space:pre;font-family:'Liberation Sans',sans-serif;right:435px;text-align:right;transform:scaleX(1.0667);transform-origin:100% 0;">20.00</div>
<div style="top:392.94px;height:24px;line-height:24px;font-size:15.3px;color:#000;white-space:pre;font-family:'Liberation Sans',sans-serif;right:330px;text-align:right;transform:scaleX(1.0667);transform-origin:100% 0;">250.00</div>
<div style="top:392.84px;height:24px;line-height:24px;font-size:15.6px;color:#000;white-space:pre;font-family:'Liberation Sans',sans-serif;left:1088.0px;width:800px;text-align:center;transform:scaleX(1.0974);transform-origin:50% 0;">#N/A</div>
<div style="top:392.94px;height:24px;line-height:24px;font-size:15.3px;color:#000;white-space:pre;font-family:'Liberation Sans',sans-serif;right:115px;text-align:right;transform:scaleX(1.0667);transform-origin:100% 0;">339.14</div>
<div style="top:416.94px;height:24px;line-height:24px;font-size:15.3px;color:#000;white-space:pre;font-family:'Liberation Sans',sans-serif;right:435px;text-align:right;transform:scaleX(1.0667);transform-origin:100% 0;">29.00</div>
<div style="top:416.94px;height:24px;line-height:24px;font-size:15.3px;color:#000;white-space:pre;font-family:'Liberation Sans',sans-serif;right:330px;text-align:right;transform:scaleX(1.0667);transform-origin:100% 0;">100.00</div>
<div style="top:416.84px;height:24px;line-height:24px;font-size:15.6px;color:#000;white-space:pre;font-family:'Liberation Sans',sans-serif;left:1088.0px;width:800px;text-align:center;transform:scaleX(1.0974);transform-origin:50% 0;">#N/A</div>
<div style="top:416.94px;height:24px;line-height:24px;font-size:15.3px;color:#000;white-space:pre;font-family:'Liberation Sans',sans-serif;right:115px;text-align:right;transform:scaleX(1.0667);transform-origin:100% 0;">212.55</div>
<div style="top:464.88px;height:24px;line-height:24px;font-size:15.5px;color:#000;white-space:pre;font-family:'Liberation Sans',sans-serif;font-weight:bold;left:121px;">Distributed Loads</div>
<div style="top:464.88px;height:24px;line-height:24px;font-size:15.5px;color:#000;white-space:pre;font-family:'Liberation Sans',sans-serif;font-weight:bold;left:609px;">Point Loads</div>
<div style="top:463.68px;height:24px;line-height:24px;font-size:15.5px;color:#000;white-space:pre;font-family:'Liberation Sans',sans-serif;font-weight:bold;left:1105px;">Beam Actions, Shear and Deflection, Conbeam   Compare with Strand7</div>
<div style="top:488.88px;height:24px;line-height:24px;font-size:15.5px;color:#000;white-space:pre;font-family:'Liberation Sans',sans-serif;font-weight:bold;left:-227.0px;width:800px;text-align:center;transform:scaleX(1.05);transform-origin:50% 0;">Start</div>
<div style="top:488.88px;height:24px;line-height:24px;font-size:15.5px;color:#000;white-space:pre;font-family:'Liberation Sans',sans-serif;font-weight:bold;left:-112.5px;width:800px;text-align:center;transform:scaleX(1.025);transform-origin:50% 0;">End</div>
<div style="top:488.88px;height:24px;line-height:24px;font-size:15.5px;color:#000;white-space:pre;font-family:'Liberation Sans',sans-serif;font-weight:bold;left:5.5px;width:800px;text-align:center;transform:scaleX(1.055);transform-origin:50% 0;">Load/m Start</div>
<div style="top:488.88px;height:24px;line-height:24px;font-size:15.5px;color:#000;white-space:pre;font-family:'Liberation Sans',sans-serif;font-weight:bold;left:135.0px;width:800px;text-align:center;transform:scaleX(1.077);transform-origin:50% 0;">Load/m End</div>
<div style="top:488.88px;height:24px;line-height:24px;font-size:15.5px;color:#000;white-space:pre;font-family:'Liberation Sans',sans-serif;font-weight:bold;left:259.5px;width:800px;text-align:center;transform:scaleX(1.01);transform-origin:50% 0;">Position</div>
<div style="top:488.88px;height:24px;line-height:24px;font-size:15.5px;color:#000;white-space:pre;font-family:'Liberation Sans',sans-serif;font-weight:bold;left:374.5px;width:800px;text-align:center;">Force</div>
<div style="top:488.88px;height:24px;line-height:24px;font-size:15.5px;color:#000;white-space:pre;font-family:'Liberation Sans',sans-serif;font-weight:bold;left:506.0px;width:800px;text-align:center;transform:scaleX(1.12);transform-origin:50% 0;">Moment</div>
<div style="top:512.88px;height:24px;line-height:24px;font-size:15.5px;color:#000;white-space:pre;font-family:'Liberation Sans',sans-serif;font-weight:bold;left:-227.0px;width:800px;text-align:center;transform:scaleX(1.12);transform-origin:50% 0;">m</div>
<div style="top:512.88px;height:24px;line-height:24px;font-size:15.5px;color:#000;white-space:pre;font-family:'Liberation Sans',sans-serif;font-weight:bold;left:-112.5px;width:800px;text-align:center;transform:scaleX(1.12);transform-origin:50% 0;">m</div>
<div style="top:512.88px;height:24px;line-height:24px;font-size:15.5px;color:#000;white-space:pre;font-family:'Liberation Sans',sans-serif;font-weight:bold;left:5.5px;width:800px;text-align:center;transform:scaleX(1.16);transform-origin:50% 0;">kN/m</div>
<div style="top:512.88px;height:24px;line-height:24px;font-size:15.5px;color:#000;white-space:pre;font-family:'Liberation Sans',sans-serif;font-weight:bold;left:135.0px;width:800px;text-align:center;transform:scaleX(1.16);transform-origin:50% 0;">kN/m</div>
<div style="top:512.88px;height:24px;line-height:24px;font-size:15.5px;color:#000;white-space:pre;font-family:'Liberation Sans',sans-serif;font-weight:bold;left:259.5px;width:800px;text-align:center;transform:scaleX(1.12);transform-origin:50% 0;">m</div>
<div style="top:512.88px;height:24px;line-height:24px;font-size:15.5px;color:#000;white-space:pre;font-family:'Liberation Sans',sans-serif;font-weight:bold;left:374.5px;width:800px;text-align:center;transform:scaleX(1.05);transform-origin:50% 0;">kN</div>
<div style="top:512.88px;height:24px;line-height:24px;font-size:15.5px;color:#000;white-space:pre;font-family:'Liberation Sans',sans-serif;font-weight:bold;left:506.0px;width:800px;text-align:center;transform:scaleX(1.11);transform-origin:50% 0;">kNm</div>
<div style="top:536.94px;height:24px;line-height:24px;font-size:15.3px;color:#000;white-space:pre;font-family:'Liberation Sans',sans-serif;right:1540px;text-align:right;transform:scaleX(1.0667);transform-origin:100% 0;">1</div>
<div style="top:536.94px;height:24px;line-height:24px;font-size:15.3px;color:#000;white-space:pre;font-family:'Liberation Sans',sans-serif;right:1422px;text-align:right;transform:scaleX(1.0667);transform-origin:100% 0;">6</div>
<div style="top:536.94px;height:24px;line-height:24px;font-size:15.3px;color:#000;white-space:pre;font-family:'Liberation Sans',sans-serif;right:1304px;text-align:right;transform:scaleX(1.0667);transform-origin:100% 0;">-100</div>
<div style="top:536.94px;height:24px;line-height:24px;font-size:15.3px;color:#000;white-space:pre;font-family:'Liberation Sans',sans-serif;right:1163px;text-align:right;transform:scaleX(1.0667);transform-origin:100% 0;">-50</div>
<div style="top:536.94px;height:24px;line-height:24px;font-size:15.3px;color:#000;white-space:pre;font-family:'Liberation Sans',sans-serif;right:1055px;text-align:right;transform:scaleX(1.0667);transform-origin:100% 0;">15</div>
<div style="top:536.94px;height:24px;line-height:24px;font-size:15.3px;color:#000;white-space:pre;font-family:'Liberation Sans',sans-serif;right:933px;text-align:right;transform:scaleX(1.0667);transform-origin:100% 0;">-120</div>
<div style="top:536.94px;height:24px;line-height:24px;font-size:15.3px;color:#000;white-space:pre;font-family:'Liberation Sans',sans-serif;right:792px;text-align:right;transform:scaleX(1.0458);transform-origin:100% 0;">0.0000E+00</div>
<div style="top:560.94px;height:24px;line-height:24px;font-size:15.3px;color:#000;white-space:pre;font-family:'Liberation Sans',sans-serif;right:1540px;text-align:right;transform:scaleX(1.0667);transform-origin:100% 0;">14</div>
<div style="top:560.94px;height:24px;line-height:24px;font-size:15.3px;color:#000;white-space:pre;font-family:'Liberation Sans',sans-serif;right:1422px;text-align:right;transform:scaleX(1.0667);transform-origin:100% 0;">19</div>
<div style="top:560.94px;height:24px;line-height:24px;font-size:15.3px;color:#000;white-space:pre;font-family:'Liberation Sans',sans-serif;right:1304px;text-align:right;transform:scaleX(1.0667);transform-origin:100% 0;">-50</div>
<div style="top:560.94px;height:24px;line-height:24px;font-size:15.3px;color:#000;white-space:pre;font-family:'Liberation Sans',sans-serif;right:1163px;text-align:right;transform:scaleX(1.0667);transform-origin:100% 0;">-100</div>
<div style="top:560.94px;height:24px;line-height:24px;font-size:15.3px;color:#000;white-space:pre;font-family:'Liberation Sans',sans-serif;right:1055px;text-align:right;transform:scaleX(1.0667);transform-origin:100% 0;">16.25</div>
<div style="top:560.94px;height:24px;line-height:24px;font-size:15.3px;color:#000;white-space:pre;font-family:'Liberation Sans',sans-serif;right:933px;text-align:right;transform:scaleX(1.0667);transform-origin:100% 0;">-120</div>
<div style="top:560.94px;height:24px;line-height:24px;font-size:15.3px;color:#000;white-space:pre;font-family:'Liberation Sans',sans-serif;right:792px;text-align:right;transform:scaleX(1.0667);transform-origin:100% 0;">0</div>
<div style="top:584.94px;height:24px;line-height:24px;font-size:15.3px;color:#000;white-space:pre;font-family:'Liberation Sans',sans-serif;right:1540px;text-align:right;transform:scaleX(1.0667);transform-origin:100% 0;">21</div>
<div style="top:584.94px;height:24px;line-height:24px;font-size:15.3px;color:#000;white-space:pre;font-family:'Liberation Sans',sans-serif;right:1422px;text-align:right;transform:scaleX(1.0667);transform-origin:100% 0;">26</div>
<div style="top:584.94px;height:24px;line-height:24px;font-size:15.3px;color:#000;white-space:pre;font-family:'Liberation Sans',sans-serif;right:1304px;text-align:right;transform:scaleX(1.0667);transform-origin:100% 0;">-50</div>
<div style="top:584.94px;height:24px;line-height:24px;font-size:15.3px;color:#000;white-space:pre;font-family:'Liberation Sans',sans-serif;right:1163px;text-align:right;transform:scaleX(1.0667);transform-origin:100% 0;">-100</div>
<div style="top:584.94px;height:24px;line-height:24px;font-size:15.3px;color:#000;white-space:pre;font-family:'Liberation Sans',sans-serif;right:1055px;text-align:right;transform:scaleX(1.0667);transform-origin:100% 0;">17.5</div>
<div style="top:584.94px;height:24px;line-height:24px;font-size:15.3px;color:#000;white-space:pre;font-family:'Liberation Sans',sans-serif;right:933px;text-align:right;transform:scaleX(1.0667);transform-origin:100% 0;">-120</div>
<div style="top:608.94px;height:24px;line-height:24px;font-size:15.3px;color:#000;white-space:pre;font-family:'Liberation Sans',sans-serif;right:1055px;text-align:right;transform:scaleX(1.0667);transform-origin:100% 0;">1.0</div>
<div style="top:608.94px;height:24px;line-height:24px;font-size:15.3px;color:#000;white-space:pre;font-family:'Liberation Sans',sans-serif;right:933px;text-align:right;transform:scaleX(1.0667);transform-origin:100% 0;">-248.5353936</div>
<div style="top:632.94px;height:24px;line-height:24px;font-size:15.3px;color:#000;white-space:pre;font-family:'Liberation Sans',sans-serif;right:1055px;text-align:right;transform:scaleX(1.0667);transform-origin:100% 0;">10</div>
<div style="top:632.94px;height:24px;line-height:24px;font-size:15.3px;color:#000;white-space:pre;font-family:'Liberation Sans',sans-serif;right:933px;text-align:right;transform:scaleX(1.0667);transform-origin:100% 0;">831.8460741</div>
<div style="top:656.94px;height:24px;line-height:24px;font-size:15.3px;color:#000;white-space:pre;font-family:'Liberation Sans',sans-serif;right:1055px;text-align:right;transform:scaleX(1.0667);transform-origin:100% 0;">20</div>
<div style="top:656.94px;height:24px;line-height:24px;font-size:15.3px;color:#000;white-space:pre;font-family:'Liberation Sans',sans-serif;right:933px;text-align:right;transform:scaleX(1.0667);transform-origin:100% 0;">89.1387718</div>
<div style="top:680.94px;height:24px;line-height:24px;font-size:15.3px;color:#000;white-space:pre;font-family:'Liberation Sans',sans-serif;right:1055px;text-align:right;transform:scaleX(1.0667);transform-origin:100% 0;">29</div>
<div style="top:680.94px;height:24px;line-height:24px;font-size:15.3px;color:#000;white-space:pre;font-family:'Liberation Sans',sans-serif;right:933px;text-align:right;transform:scaleX(1.0667);transform-origin:100% 0;">112.5505475</div>
<div style="top:560.94px;height:24px;line-height:24px;font-size:15.3px;color:#000;white-space:pre;font-family:'Liberation Sans',sans-serif;left:1755.3px;transform:scaleX(1.06);transform-origin:0 0;">6</div>
<div style="top:584.94px;height:24px;line-height:24px;font-size:15.3px;color:#000;white-space:pre;font-family:'Liberation Sans',sans-serif;left:1755.3px;transform:scaleX(1.06);transform-origin:0 0;">6</div>
<div style="top:608.94px;height:24px;line-height:24px;font-size:15.3px;color:#000;white-space:pre;font-family:'Liberation Sans',sans-serif;left:1755.3px;transform:scaleX(1.06);transform-origin:0 0;">6</div>
<div style="top:632.94px;height:24px;line-height:24px;font-size:15.3px;color:#000;white-space:pre;font-family:'Liberation Sans',sans-serif;left:1755.3px;transform:scaleX(1.06);transform-origin:0 0;">6</div>
<div style="top:656.94px;height:24px;line-height:24px;font-size:15.3px;color:#000;white-space:pre;font-family:'Liberation Sans',sans-serif;left:1755.3px;transform:scaleX(1.06);transform-origin:0 0;">6</div>
<div style="top:680.94px;height:24px;line-height:24px;font-size:15.3px;color:#000;white-space:pre;font-family:'Liberation Sans',sans-serif;left:1755.3px;transform:scaleX(1.06);transform-origin:0 0;">6</div>
<div style="top:704.94px;height:24px;line-height:24px;font-size:15.3px;color:#000;white-space:pre;font-family:'Liberation Sans',sans-serif;left:1755.3px;transform:scaleX(1.06);transform-origin:0 0;">6</div>
<div style="top:728.94px;height:24px;line-height:24px;font-size:15.3px;color:#000;white-space:pre;font-family:'Liberation Sans',sans-serif;left:1755.3px;transform:scaleX(1.06);transform-origin:0 0;">7</div>
<div style="left:1437px;top:125px;width:102px;height:27px;border:2px solid #217346;box-sizing:border-box"></div>
<div style="left:1534px;top:147px;width:7px;height:7px;background:#fff;"></div>
<div style="left:1535px;top:148px;width:5px;height:5px;background:#217346;"></div>
<svg style="left:463px;top:125px" width="145" height="28"><rect x="2" y="2" width="140" height="23" fill="none" stroke="#fff" stroke-width="2"/><rect x="2" y="2" width="140" height="23" fill="none" stroke="#217346" stroke-width="2" stroke-dasharray="6.8 2.27" stroke-dashoffset="-1"/></svg>
<div style="left:1007px;top:472px;width:748px;height:300px;background:#5c90ca;border:1px solid #4a79b3;box-sizing:border-box;box-shadow:0 0 5px rgba(0,0,0,.18)"></div>
<div style="left:1015px;top:509px;width:732px;height:262px;background:#5585c0;"></div>
<div style="left:1016px;top:510px;width:730px;height:260px;background:#f0f0f0;"></div>
<div style="top:479.85px;height:24px;line-height:24px;font-size:18px;color:#303030;white-space:pre;font-family:'Liberation Sans',sans-serif;left:981px;width:800px;text-align:center;transform:scaleX(1.023);transform-origin:50% 0;">Solver Parameters</div>
<div style="left:1706px;top:473px;width:41px;height:26px;background:#c75050;"></div>
<svg style="left:1720.8px;top:480.8px" width="12" height="10"><path d="M0 0H3.2L5.65 3L8.1 0H11.3L7.25 4.6L11.3 9.2H8.1L5.65 6.2L3.2 9.2H0L4.05 4.6z" fill="#fff"/></svg>
<div style="left:1034px;top:522px;width:693px;height:260px;border:1px solid #dcdcdc;box-sizing:border-box;box-shadow:inset 1px 1px 0 #fafafa"></div>
<div style="top:539.74px;height:24px;line-height:24px;font-size:12.9px;color:#111;white-space:pre;font-family:'Liberation Sans',sans-serif;left:1054.5px;">Se<span style="text-decoration:underline;text-underline-offset:0.6px;text-decoration-thickness:1.2px">t</span> Objective:</div>
<div style="left:1241px;top:539px;width:443px;height:25px;background:#fff;border:1px solid #abadb3;box-sizing:border-box"></div>
<div style="top:539.74px;height:24px;line-height:24px;font-size:12.9px;color:#111;white-space:pre;font-family:'Liberation Sans',sans-serif;left:1246px;">$E$58</div>
<div style="left:1281px;top:543px;width:1px;height:16px;background:#000;"></div>
<div style="top:579.74px;height:24px;line-height:24px;font-size:12.9px;color:#111;white-space:pre;font-family:'Liberation Sans',sans-serif;left:1054.5px;">To:</div>
<div style="left:1119.5px;top:584px;width:16px;height:16px;border-radius:50%;background:#fff;border:1px solid #4a4a4a;box-sizing:border-box"></div>
<div style="top:581.74px;height:24px;line-height:24px;font-size:12.9px;color:#111;white-space:pre;font-family:'Liberation Sans',sans-serif;left:1141px;"><span style="text-decoration:underline;text-underline-offset:0.6px;text-decoration-thickness:1.2px">M</span>ax</div>
<div style="left:1228px;top:584px;width:16px;height:16px;border-radius:50%;background:#fff;border:1px solid #4a4a4a;box-sizing:border-box"></div>
<div style="top:581.74px;height:24px;line-height:24px;font-size:12.9px;color:#111;white-space:pre;font-family:'Liberation Sans',sans-serif;left:1249px;">Mi<span style="text-decoration:underline;text-underline-offset:0.6px;text-decoration-thickness:1.2px">n</span></div>
<div style="left:1328px;top:584px;width:16px;height:16px;border-radius:50%;background:#fff;border:1px solid #4a4a4a;box-sizing:border-box"></div>
<div style="left:1332.5px;top:588.5px;width:7px;height:7px;border-radius:50%;background:#222"></div>
<div style="top:581.74px;height:24px;line-height:24px;font-size:12.9px;color:#111;white-space:pre;font-family:'Liberation Sans',sans-serif;left:1349px;"><span style="text-decoration:underline;text-underline-offset:0.6px;text-decoration-thickness:1.2px">V</span>alue Of:</div>
<div style="left:1475px;top:579px;width:235px;height:25px;background:#fff;border:1px solid #abadb3;box-sizing:border-box"></div>
<div style="top:579.74px;height:24px;line-height:24px;font-size:12.9px;color:#111;white-space:pre;font-family:'Liberation Sans',sans-serif;left:1479.5px;">0</div>
<div style="top:619.74px;height:24px;line-height:24px;font-size:12.9px;color:#111;white-space:pre;font-family:'Liberation Sans',sans-serif;left:1054.5px;"><span style="text-decoration:underline;text-underline-offset:0.6px;text-decoration-thickness:1.2px">B</span>y Changing Variable Cells:</div>
<div style="left:1052px;top:643px;width:632px;height:25px;background:#fff;border:1px solid #abadb3;box-sizing:border-box"></div>
<div style="top:643.74px;height:24px;line-height:24px;font-size:12.9px;color:#111;white-space:pre;font-family:'Liberation Sans',sans-serif;left:1057px;transform:scaleX(0.955);transform-origin:0 0;">$G$78:$G$81</div>
<div style="left:1683px;top:539px;width:27px;height:25px;background:#e9e9e9;border:2px solid #adadad;box-sizing:border-box;box-shadow:inset 0 0 0 1px #f2f2f2"></div>
<svg style="left:1687px;top:544px" width="18" height="15" viewBox="0 0 18 15"><defs><linearGradient id="g1683_539" x1="0" y1="0" x2="1" y2="1"><stop offset="0" stop-color="#fff"/><stop offset=".5" stop-color="#f1f5fd"/><stop offset="1" stop-color="#86a9ea"/></linearGradient></defs><rect width="18" height="15" fill="url(#g1683_539)"/><rect x="0" y="0" width="7" height="1.6" fill="#3f74d8"/><rect x="0" y="1.6" width="7" height="3" fill="#1f3560"/><rect x="1" y="2.2" width="5" height="1.7" fill="#c9c5b8"/><rect x="7" y="0" width="11" height="1" fill="#6a8ccc"/><rect x="7" y="3.8" width="11" height="1" fill="#5b7fc0"/><rect x="0" y="7.3" width="18" height="1.2" fill="#5b7fc0"/><rect x="0" y="10.9" width="18" height="1" fill="#5b7fc0"/><rect x="0" y="4.6" width="1" height="10.4" fill="#5070b0"/><rect x="6.2" y="0" width="1" height="15" fill="#5070b0"/><rect x="12.2" y="0" width="1" height="15" fill="#5070b0"/><path d="M6 4.1L11.6 4.3L10.4 5.8L14.1 9.3L11.6 12L8 8.2L6.2 9.9z" fill="#d9301c" stroke="#c02a18" stroke-width=".4"/></svg>
<div style="left:1683px;top:643px;width:27px;height:25px;background:#e9e9e9;border:2px solid #adadad;box-sizing:border-box;box-shadow:inset 0 0 0 1px #f2f2f2"></div>
<svg style="left:1687px;top:648px" width="18" height="15" viewBox="0 0 18 15"><defs><linearGradient id="g1683_643" x1="0" y1="0" x2="1" y2="1"><stop offset="0" stop-color="#fff"/><stop offset=".5" stop-color="#f1f5fd"/><stop offset="1" stop-color="#86a9ea"/></linearGradient></defs><rect width="18" height="15" fill="url(#g1683_643)"/><rect x="0" y="0" width="7" height="1.6" fill="#3f74d8"/><rect x="0" y="1.6" width="7" height="3" fill="#1f3560"/><rect x="1" y="2.2" width="5" height="1.7" fill="#c9c5b8"/><rect x="7" y="0" width="11" height="1" fill="#6a8ccc"/><rect x="7" y="3.8" width="11" height="1" fill="#5b7fc0"/><rect x="0" y="7.3" width="18" height="1.2" fill="#5b7fc0"/><rect x="0" y="10.9" width="18" height="1" fill="#5b7fc0"/><rect x="0" y="4.6" width="1" height="10.4" fill="#5070b0"/><rect x="6.2" y="0" width="1" height="15" fill="#5070b0"/><rect x="12.2" y="0" width="1" height="15" fill="#5070b0"/><path d="M6 4.1L11.6 4.3L10.4 5.8L14.1 9.3L11.6 12L8 8.2L6.2 9.9z" fill="#d9301c" stroke="#c02a18" stroke-width=".4"/></svg>
<div style="top:684.04px;height:24px;line-height:24px;font-size:12.9px;color:#111;white-space:pre;font-family:'Liberation Sans',sans-serif;left:1054.5px;">S<span style="text-decoration:underline;text-underline-offset:0.6px;text-decoration-thickness:1.2px">u</span>bject to the Constraints:</div>
<div style="left:1052px;top:707px;width:478px;height:60px;background:#fff;border:1px solid #828790;box-sizing:border-box"></div>
<div style="left:1508px;top:709px;width:21px;height:40px;background:#f0f0f0;"></div>
<svg style="left:1511px;top:714px" width="14" height="10"><path d="M2.8 8.4L7 4L11.2 8.4" stroke="#c3c3c3" stroke-width="2.1" fill="none"/></svg>
<div style="left:1557px;top:708px;width:143px;height:29px;background:linear-gradient(#f2f2f2,#e4e4e4);border:1px solid #acacac;box-sizing:border-box"></div>
<div style="top:711.54px;height:24px;line-height:24px;font-size:13.5px;color:#111;white-space:pre;font-family:'Liberation Sans',sans-serif;left:1228.5px;width:800px;text-align:center;"><span style="text-decoration:underline;text-underline-offset:0.6px;text-decoration-thickness:1.2px">A</span>dd</div>
</div></body></html>
